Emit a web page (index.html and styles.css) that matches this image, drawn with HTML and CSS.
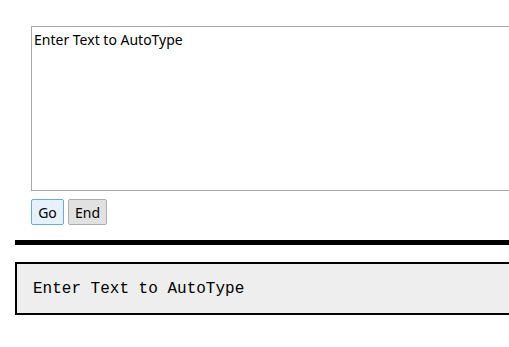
FILE: index.html
```html
<!DOCTYPE html>
<html>
<head>
<meta charset="utf-8">
<link rel="stylesheet" href="styles.css">
</head>
<body>
<div class="page">
  <div class="editor">
    <textarea class="input">Enter Text to AutoType</textarea>
    <div class="actions">
      <button class="btn btn-focus">Go</button>
      <button class="btn">End</button>
    </div>
  </div>
  <div class="rule"></div>
  <div class="output">Enter Text to AutoType</div>
</div>
</body>
</html>
```
FILE: styles.css
```css
html, body {
  margin: 0;
  padding: 0;
  background: #fff;
  overflow: hidden;
}
.page {
  width: 620px;
  padding: 26px 0 0 15px;
}
.editor {
  padding-left: 16px;
}
.input {
  display: block;
  box-sizing: border-box;
  width: 560px;
  height: 165px;
  margin: 0;
  padding: 4px 2px;
  border: 1px solid #a9a9a9;
  resize: none;
  font-family: "Noto Sans", sans-serif;
  font-size: 14px;
  line-height: 18px;
  color: #000;
  background: #fff;
  outline: none;
}
.actions {
  display: flex;
  gap: 4px;
  margin-top: 8px;
}
.btn {
  box-sizing: border-box;
  height: 26px;
  padding: 0 6px;
  margin: 0;
  border: 1px solid #adadad;
  border-radius: 2px;
  background: #e1e1e1;
  font-family: "Noto Sans", sans-serif;
  font-size: 14px;
  color: #000;
}
.btn-focus {
  border-color: #6fa6e6;
  background: #e5f1fb;
  width: 33px;
}
.rule {
  height: 5px;
  margin-top: 15px;
  background: #000;
}
.output {
  margin-top: 17px;
  border: 2px solid #000;
  background: #eee;
  padding: 16px 16px 15px;
  font-family: "Liberation Mono", "Courier New", monospace;
  font-size: 16px;
  line-height: 18px;
  color: #000;
}
```
